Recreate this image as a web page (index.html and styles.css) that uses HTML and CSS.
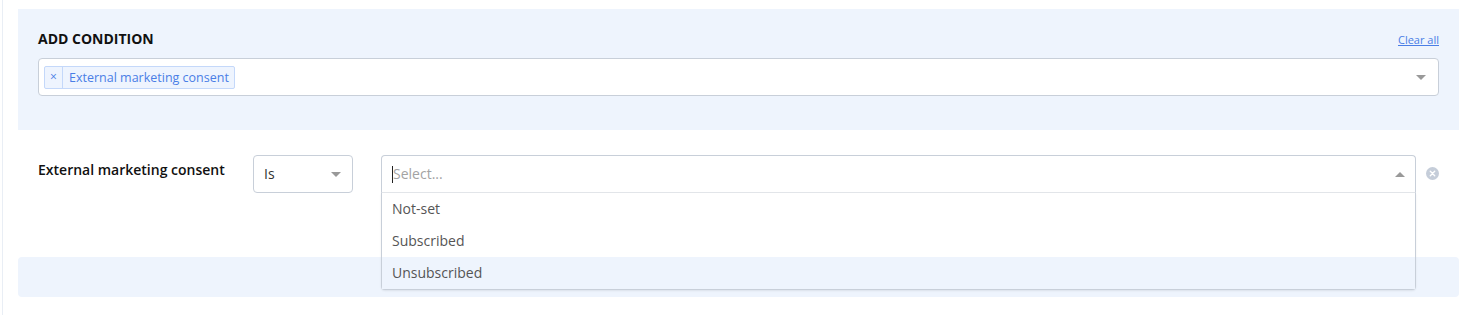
FILE: index.html
```html
<!DOCTYPE html>
<html>

<head>
    <meta charset="utf-8">
    <meta name="viewport" content="width=device-width,initial-scale=1.0">
    <title>Conditions</title>
    <link rel="stylesheet" href="styles.css">
</head>

<body>
    <div class="page">
        <div class="panel">
            <div class="panel-head">
                <div class="panel-title">ADD CONDITION</div>
                <a class="clear-all" href="#">Clear all</a>
            </div>
            <div class="multi-select">
                <div class="tags">
                    <span class="tag">
                        <span class="tag-remove">&times;</span>
                        <span class="tag-label">External marketing consent</span>
                    </span>
                </div>
                <span class="arrow"></span>
            </div>
        </div>

        <div class="condition">
            <div class="condition-label">External marketing consent</div>
            <div class="select op-select">
                <span class="select-value">Is</span>
                <span class="arrow"></span>
            </div>
            <div class="value-select">
                <div class="value-control">
                    <span class="caret"></span>
                    <span class="placeholder">Select...</span>
                    <span class="arrow up"></span>
                </div>
                <div class="menu">
                    <div class="option">Not-set</div>
                    <div class="option">Subscribed</div>
                    <div class="option focused">Unsubscribed</div>
                </div>
            </div>
            <div class="remove">
                <svg width="13" height="13" viewBox="0 0 13 13">
                    <circle cx="6.5" cy="6.5" r="6.5" fill="#c5cdd9"/>
                    <path d="M4.3 4.3 L8.7 8.7 M8.7 4.3 L4.3 8.7" stroke="#fff" stroke-width="1.4" stroke-linecap="round"/>
                </svg>
            </div>
        </div>

        <div class="band"></div>
    </div>
</body>

</html>
```

FILE: styles.css
```css
html,
body {
    margin: 0;
    padding: 0;
    background: #fff;
}

body {
    font-family: "Open Sans", "Noto Sans", sans-serif;
    color: #333;
}

.page {
    margin-left: 2px;
    border-left: 1px solid #e9eef5;
    padding: 9px 7px 0 15px;
    height: 306px;
}

.panel {
    background-color: #eef4fd;
    padding: 20px 20px 34px 20px;
}

.panel-head {
    display: flex;
    justify-content: space-between;
    align-items: flex-start;
    height: 18px;
    margin-bottom: 11px;
}

.panel-title {
    font-size: 14px;
    font-weight: 700;
    line-height: 18px;
    margin-top: 1px;
    color: #111;
}

.clear-all {
    font-size: 11px;
    line-height: 14px;
    margin-top: 4px;
    color: #4a7ee6;
    text-decoration: underline;
}

.multi-select {
    display: flex;
    align-items: center;
    height: 36px;
    background: #fff;
    border: 1px solid #c8cfd9;
    border-radius: 4px;
    padding: 0 12px 0 5px;
}

.tags {
    flex: 1;
    align-self: flex-start;
    padding-top: 5px;
}

.tag {
    display: inline-flex;
    align-items: stretch;
    height: 21px;
    border: 1px solid #c4d8fa;
    border-radius: 2px;
    background: #eef4fe;
    color: #4a7ee6;
    font-size: 12.5px;
    line-height: 21px;
}

.tag-remove {
    width: 17px;
    text-align: center;
    border-right: 1px solid #c4d8fa;
    font-size: 12px;
    line-height: 19px;
}

.tag-label {
    padding: 0 5px 0 6px;
}

.arrow {
    width: 0;
    height: 0;
    border-left: 5px solid transparent;
    border-right: 5px solid transparent;
    border-top: 5px solid #999;
}

.arrow.up {
    border-top: 0;
    border-bottom: 5px solid #999;
}

.condition {
    display: flex;
    align-items: flex-start;
    margin-top: 25px;
    padding: 0 20px;
}

.condition-label {
    width: 215px;
    font-size: 14px;
    font-weight: 600;
    line-height: 20px;
    padding-top: 5px;
    color: #111;
}

.select {
    display: flex;
    align-items: center;
    justify-content: space-between;
    box-sizing: border-box;
    height: 38px;
    border: 1px solid #c8cfd9;
    border-radius: 4px;
    padding: 0 11px 0 10px;
    font-size: 14px;
}

.select-value {
    margin-bottom: 2px;
}

.op-select {
    width: 100px;
    margin-right: 28px;
}

.value-select {
    position: relative;
    width: 1035px;
}

.value-control {
    display: flex;
    align-items: center;
    box-sizing: border-box;
    height: 38px;
    border: 1px solid #c8cfd9;
    border-bottom-color: #e3e6ea;
    border-radius: 4px 4px 0 0;
    padding: 0 10px 0 10px;
    font-size: 14px;
}

.caret {
    width: 1px;
    height: 17px;
    background: #222;
}

.placeholder {
    flex: 1;
    color: #a3a3a3;
    margin-bottom: 2px;
}

.menu {
    position: absolute;
    top: 100%;
    left: 0;
    right: 0;
    background: #fff;
    border: 1px solid #c8cfd9;
    border-top: 0;
    border-radius: 0 0 4px 4px;
    box-shadow: 0 1px 2px rgba(0, 0, 0, 0.08);
}

.option {
    height: 32px;
    line-height: 32px;
    padding-left: 10px;
    font-size: 14px;
    color: #555;
}

.option.focused {
    background: #eef4fd;
}

.remove {
    flex: 1;
    display: flex;
    justify-content: flex-end;
    padding-top: 12px;
}

.band {
    margin-top: 64px;
    height: 40px;
    border-radius: 4px;
    background-color: #eef4fd;
}
```
